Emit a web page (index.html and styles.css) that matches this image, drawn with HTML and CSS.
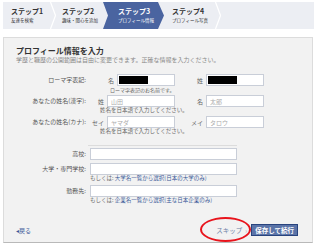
FILE: index.html
```html
<!DOCTYPE html>
<html lang="ja">
<head>
    <meta charset="UTF-8">
    <title>プロフィール情報を入力</title>
    <link rel="stylesheet" href="styles.css">
</head>
<body>
    <div class="steps">
        <div class="step first">
            <div class="step-title">ステップ1</div>
            <div class="step-sub">友達を検索</div>
        </div>
        <svg class="sep" width="6" height="27" viewBox="0 0 6 27"><polyline points="0.5,0 5.5,13.5 0.5,27" fill="none" stroke="#fff" stroke-width="1.2"/></svg>
        <div class="step second">
            <div class="step-title">ステップ2</div>
            <div class="step-sub">趣味・関心を追加</div>
        </div>
        <div class="step current">
            <div class="step-title">ステップ3</div>
            <div class="step-sub">プロフィール情報</div>
        </div>
        <div class="step fourth">
            <div class="step-title">ステップ4</div>
            <div class="step-sub">プロフィール写真</div>
        </div>
        <svg class="sep" width="6" height="27" viewBox="0 0 6 27"><polyline points="0.5,0 5.5,13.5 0.5,27" fill="none" stroke="#fff" stroke-width="1.2"/></svg>
        <div class="step rest"></div>
    </div>

    <div class="panel">
        <h1 class="panel-title">プロフィール情報を入力</h1>
        <p class="panel-lead">学歴と職歴の公開範囲は自由に変更できます。正確な情報を入力ください。</p>

        <div class="name-row">
            <div class="label">ローマ字表記:</div>
            <div class="pair">
                <span>名</span>
                <span class="box short"><span class="redact"></span></span>
            </div>
            <div class="pair">
                <span>姓</span>
                <span class="box short"><span class="redact"></span></span>
            </div>
            <div class="hint hint-small">ローマ字表記のお名前です。</div>
        </div>

        <div class="name-row">
            <div class="label">あなたの姓名(漢字):</div>
            <div class="pair">
                <span>姓</span>
                <input class="box long" type="text" placeholder="山田">
            </div>
            <div class="pair">
                <span>名</span>
                <input class="box short" type="text" placeholder="太郎">
            </div>
            <div class="hint">姓名を日本語で入力してください。</div>
        </div>

        <div class="name-row">
            <div class="label">あなたの姓名(カナ):</div>
            <div class="pair">
                <span>セイ</span>
                <input class="box long" type="text" placeholder="ヤマダ">
            </div>
            <div class="pair">
                <span>メイ</span>
                <input class="box short" type="text" placeholder="タロウ">
            </div>
            <div class="hint">姓名を日本語で入力してください。</div>
        </div>

        <div class="divider"></div>

        <div class="edu-row">
            <div class="label">高校:</div>
            <input class="box wide" type="text">
        </div>
        <div class="edu-row">
            <div class="label">大学・専門学校:</div>
            <input class="box wide" type="text">
            <div class="alt">もしくは: <a href="#">大学名一覧から選択(日本の大学のみ)</a></div>
        </div>
        <div class="edu-row">
            <div class="label">勤務先:</div>
            <input class="box wide" type="text">
            <div class="alt">もしくは: <a href="#">企業名一覧から選択(主な日本企業のみ)</a></div>
        </div>

        <div class="actions">
            <a class="back" href="#">&#9666;戻る</a>
            <div class="right">
                <span class="skip">スキップ<span class="dot">&#8250;</span></span>
                <button type="button" class="save">保存して続行</button>
                <span class="circle"></span>
            </div>
        </div>
    </div>
</body>
</html>
```

FILE: styles.css
```css
body {
    margin: 0;
    background-color: #fff;
    font-family: "Noto Sans CJK JP", "Noto Sans", sans-serif;
    color: #333;
}

.steps {
    display: flex;
    height: 27px;
    margin: 2px 3px 0;
    background-color: #eceef3;
}

.step {
    box-sizing: border-box;
    padding-top: 5px;
    line-height: 1;
}

.step-title {
    font-size: 7px;
    font-weight: bold;
    height: 9px;
    line-height: 9px;
}

.step-sub {
    font-size: 4.5px;
    height: 7px;
    line-height: 7px;
    margin-top: 1px;
}

.step.first {
    width: 47px;
    padding-left: 8px;
}

.step.second {
    width: 47px;
    padding-left: 6px;
}

.step.current {
    width: 61px;
    padding-left: 15px;
    margin-right: -4px;
    background-color: #4a64a0;
    color: #fff;
    clip-path: polygon(0 0, 55px 0, 61px 50%, 55px 100%, 0 100%, 5px 50%);
}

.step.fourth {
    width: 55px;
    padding-left: 12px;
}

.step.rest {
    flex: 1;
}

.sep {
    display: block;
    flex: none;
}

.panel {
    box-sizing: border-box;
    height: 206px;
    margin: 8px 4px 0 3px;
    padding: 8px 12px 0;
    background-color: #f2f2f2;
    border: 1px solid #dcdcdc;
    border-bottom-color: #b9b9b9;
}

.panel-title {
    margin: 0;
    font-size: 8px;
    line-height: 10px;
    font-weight: bold;
    color: #333;
}

.panel-lead {
    margin: 0 0 10px;
    font-size: 6px;
    line-height: 8px;
    color: #888;
}

.label {
    font-size: 6px;
    line-height: 12px;
    text-align: right;
    color: #555;
    white-space: nowrap;
}

.name-row {
    display: grid;
    grid-template-columns: 70px 89px 89px;
    align-items: center;
    margin-bottom: 1px;
}

.name-row + .name-row {
    margin-top: 2px;
}

.pair {
    display: flex;
    justify-content: flex-end;
    align-items: center;
    gap: 3px;
    font-size: 6px;
    color: #666;
}

.box {
    display: block;
    box-sizing: border-box;
    height: 12px;
    margin: 0;
    padding: 0 3px;
    background-color: #fff;
    border: 1px solid #c9ced8;
    font-family: inherit;
    font-size: 6px;
    outline: none;
}

.box::placeholder {
    color: #aaa;
}

.box.short {
    width: 58px;
}

.box.long {
    width: 68px;
}

.box.wide {
    width: 147px;
}

.redact {
    display: block;
    width: 29px;
    height: 8px;
    margin: 1px 0 0 -2px;
    background-color: #000;
}

.hint {
    grid-column: 2 / 4;
    padding-left: 14px;
    font-size: 5.5px;
    line-height: 7px;
    color: #666;
    white-space: nowrap;
}

.hint.hint-small {
    padding-left: 24px;
    font-size: 5px;
}

.divider {
    height: 1px;
    margin: 10px 0 2px 72px;
    width: 149px;
    background-color: #dcdcdc;
}

.edu-row {
    display: grid;
    grid-template-columns: 70px 147px;
    column-gap: 4px;
    align-items: center;
    margin-bottom: 3px;
}

.alt {
    grid-column: 2;
    font-size: 5.5px;
    line-height: 7px;
    color: #666;
    white-space: nowrap;
}

.alt a {
    color: #3b5998;
    text-decoration: none;
}

.actions {
    display: flex;
    justify-content: space-between;
    align-items: center;
    margin-top: 20px;
}

.back {
    font-size: 6px;
    color: #3b5998;
    text-decoration: none;
}

.right {
    position: relative;
    display: flex;
    align-items: center;
    gap: 4px;
    margin-right: 2px;
}

.skip {
    font-size: 6.5px;
    color: #6d7fa6;
}

.dot {
    margin-left: 3px;
    color: #aaa;
}

.save {
    height: 12px;
    padding: 0 3px;
    background-color: #5b74a8;
    border: 1px solid #29447e;
    color: #fff;
    font-family: inherit;
    font-size: 6.5px;
    font-weight: bold;
    line-height: 10px;
}

.circle {
    position: absolute;
    left: -16px;
    top: -7px;
    width: 47px;
    height: 21px;
    border: 2px solid #e8141c;
    border-radius: 50%;
}
```
